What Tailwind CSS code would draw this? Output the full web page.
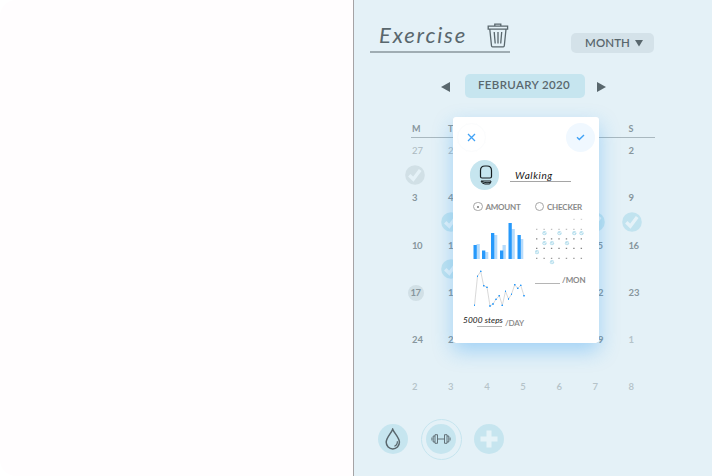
<!DOCTYPE html>
<html lang="en">
<head>
<meta charset="utf-8">
<title>Exercise</title>
<script src="https://cdn.jsdelivr.net/npm/@tailwindcss/browser@4"></script>
</head>
<body class="bg-white font-['Lato',sans-serif] leading-none">
<svg class="hidden">
  <symbol id="tick" viewBox="0 0 20 20"><circle cx="10" cy="10" r="9.8" fill="currentColor"/><path d="M4.300 10.200 8.300 14.200 15.200 5" fill="none" stroke="#e5f2f8" stroke-width="3.400"/></symbol>
  <symbol id="mini" viewBox="0 0 6 6"><circle cx="3" cy="3" r="2.100" fill="#b9e0ee"/><path d="M1.8 3.1 2.7 4 4.1 2" fill="none" stroke="#fff" stroke-width=".8"/></symbol>
</svg>
<div class="flex h-[476px] w-[712px] overflow-hidden rounded-l-[16px] bg-[#fffdfe]">
  <section class="w-[353px] shrink-0"></section>
  <main class="relative flex grow flex-col border-l border-[#a5a3a5] bg-[#e4f1f7] text-[#59676d]">
    <header class="flex h-[73px] items-start justify-between pr-[58px] pl-4">
      <div class="mt-[22px] flex h-[30.5px] w-[140px] justify-between border-b-2 border-[#a0adb3] pr-px pl-[9px]">
        <h1 class="pt-px text-[22px] leading-[24px] font-normal italic tracking-[1.8px] whitespace-nowrap">Exercise</h1>
        <svg class="-ml-2 mt-[1px] h-[25px] w-[22px] shrink-0" viewBox="0 0 22 25" fill="none" stroke="currentColor" stroke-width="1.3"><path d="M7.8 3V1.2h6V3M1.2 3.2h19.4v3H1.2zM2.8 6.3 4.5 22.8q.1 1 1 1h10.800q.9 0 1-1L19 6.300M7.200 9l1 11.500M11 9v11.500M14.700 9l-1 11.500"/></svg>
      </div>
      <button class="mt-[32.500px] flex h-[20px] w-[83px] items-center gap-[5px] rounded-[5px] bg-[#d4e2e9] pl-[14px] text-[11.5px] font-semibold tracking-[.1px]">MONTH<svg class="size-[8px]" viewBox="0 0 8 8"><path d="M0 1h8L4 7.500z" fill="currentColor"/></svg></button>
    </header>
    <nav class="flex h-[25px] items-center gap-[12px] pl-[87px]">
      <svg class="mt-[2px] h-[10px] w-[12px]" viewBox="0 0 12 10"><path d="M9 0v10L0 5z" fill="currentColor"/></svg>
      <div class="flex h-[24px] w-[120px] items-center justify-center rounded-[5px] bg-[#c6e5ef] pr-[2px] pb-px text-[11.5px] font-semibold tracking-[.35px] whitespace-nowrap">FEBRUARY 2020</div>
      <svg class="mt-[2px] h-[10px] w-[9px]" viewBox="0 0 9 10"><path d="M0 0v10L9 5z" fill="currentColor"/></svg>
    </nav>
    <div class="mt-[26px] ml-[57px] h-[289px] w-[244px] text-[9.5px] font-bold text-[#87969d]">
      <div class="grid h-[14px] grid-cols-[repeat(7,36.1px)] border-b border-[#a9b8bf] pl-px text-[9px]"><span>M</span><span>T</span><span class="col-start-7">S</span></div>
      <div class="grid auto-rows-[47.300px] grid-cols-[repeat(7,36.1px)] pt-[8px] pl-px">
        <div class="font-normal text-[#abb9c0]">27<svg class="mt-[9px] -ml-[7px] size-[20px] text-[#d1e0e6]"><use href="#tick"/></svg></div><div class="font-normal text-[#abb9c0]">28</div><div class="col-start-7">2</div>
        <div>3</div><div>4<svg class="mt-[9px] -ml-[7px] size-[20px] text-[#c1e3ef]"><use href="#tick"/></svg></div><div class="col-start-6">8<svg class="mt-[9px] -ml-[7px] size-[20px] text-[#c1e3ef]"><use href="#tick"/></svg></div><div>9<svg class="mt-[9px] -ml-[7px] size-[20px] text-[#c1e3ef]"><use href="#tick"/></svg></div>
        <div class="tracking-[-.6px]">10</div><div class="tracking-[-1px]">11<svg class="mt-[9px] -ml-[7px] size-[20px] text-[#c1e3ef]"><use href="#tick"/></svg></div><div class="col-start-6 tracking-[-.6px]">15</div><div class="tracking-[-.6px]">16</div>
        <div><span class="-mt-[3px] -ml-[4.500px] flex size-[16px] items-center justify-center rounded-full bg-[#d1e0e6] tracking-[-.6px]">17</span></div><div class="tracking-[-.6px]">18</div><div class="col-start-6">22</div><div>23</div>
        <div>24</div><div>25</div><div class="col-start-6">29</div><div class="text-[#b5c3c9]">1</div>
        <div class="contents font-semibold text-[#b5c3c9]"><span>2</span><span>3</span><span>4</span><span>5</span><span>6</span><span>7</span><span>8</span></div>
      </div>
    </div>
    <footer class="mt-[5px] ml-[24px] flex h-[42px] items-center">
      <span class="flex size-[30px] items-center justify-center rounded-full bg-[#c6e5ef]"><svg class="h-[22px] w-[16px]" viewBox="0 0 16 22" fill="none" stroke="currentColor" stroke-width="1.500"><path d="M7.700 1.200C6 5.500 1.200 9.500 1.200 14.300a6.600 6.600 0 0 0 13.200 0C14.400 9.500 9.400 5.500 7.700 1.200z"/><path d="M12.400 13.200c.1 2.500-1 4.200-3 5" stroke-width="1.200"/></svg></span>
      <span class="ml-[12.500px] flex size-[41px] items-center justify-center rounded-full border border-[#c6e5ef]"><span class="flex size-[30px] items-center justify-center rounded-full bg-[#c6e5ef]"><svg class="h-[10px] w-[20px]" viewBox="0 0 20 10" fill="none" stroke="currentColor" stroke-width=".9"><path d="M4 .7h2.500v8.600H4zM13.500.700H16v8.600h-2.500zM6.500 5h7M4 2H2.200v6H4M16 2h1.800v6H16M.900 3.500v3M19.100 3.500v3"/></svg></span></span>
      <span class="ml-[12.500px] flex size-[30px] items-center justify-center rounded-full bg-[#c6e5ef]"><svg class="size-[18px]" viewBox="0 0 18 18"><path d="M6.500.500h5v6h6v5h-6v6h-5v-6h-6v-5h6z" fill="#e5f3f8"/></svg></span>
    </footer>

    <div role="dialog" class="absolute top-[117px] left-[99px] h-[226px] w-[146px] rounded-[3px] bg-white text-[#8a8a8a] shadow-[0_8px_20px_rgba(33,150,243,0.34)]">
      <div class="flex h-[43px] justify-between pt-[6px] pr-[4px] pl-[4px]">
        <span class="flex size-[29px] items-center justify-center rounded-full border border-[#fbfcfd]"><svg class="size-[9px]" viewBox="0 0 9 9"><path d="M1 1l7 7M8 1 1 8" stroke="#40a2f6" stroke-width="1.300"/></svg></span>
        <span class="flex size-[29px] items-center justify-center rounded-full bg-[#f0f8ff]"><svg class="h-[7px] w-[9px]" viewBox="0 0 9 7" fill="none"><path d="M1 3.300 3.300 5.500 8 1" stroke="#40a2f6" stroke-width="1.400"/></svg></span>
      </div>
      <div class="flex h-[30px] gap-[11px] pl-[16.500px]">
        <span class="flex size-[29.500px] items-center justify-center rounded-full bg-[#c6e5ef] pl-[3px]"><svg class="h-[20px] w-[14px]" viewBox="0 0 14 20" fill="none" stroke="#161d20"><path d="M1.500 11.500V5.500Q1.500 1 6 1h2q4.500 0 4.500 4.500v6q0 1.500-1.500 1.500H3q-1.500 0-1.500-1.500z" stroke-width="1.200"/><path d="M2 16h10l-.5 2q-.3 1-1.500 1H6Q3 19 2 16zM3 16.400q2 1.500 5 1.300l3.500-.2" stroke-width="1"/></svg></span>
        <div class="h-[22px] w-[61px] border-b border-[#a5a5a5] pt-[10px] pl-[5px] text-[10px] font-normal text-[#161616] italic tracking-[.6px]">Walking</div>
      </div>
      <div class="mt-[11px] flex h-[11px] items-center pl-[20px] text-[8px] font-bold whitespace-nowrap">
        <span class="flex size-[9.500px] items-center justify-center rounded-full border border-[#a6a6a6]"><i class="size-[2px] rounded-full bg-[#777]"></i></span><span class="ml-[3px] w-[36px] pt-px tracking-[-.25px]">AMOUNT</span>
        <span class="ml-[13px] size-[9.500px] rounded-full border border-[#a6a6a6]"></span><span class="ml-[3px] pt-px tracking-[-.2px]">CHECKER</span>
      </div>
      <div class="flex gap-[8px] pt-[4px] pl-[20px]">
        <div class="w-[54px]">
          <svg class="h-[43px] w-[54px]" viewBox="473 216 54 43"><path fill="#b5dbfc" d="M476.500 244h3.300v15h-3.300zM485 252h3.300v7H485zM494 235h3.300v24H494zM502.500 245h3.300v14h-3.300zM511.500 229h3.300v30h-3.300zM520 239h3.300v20H520z"/><path fill="#2699fb" d="M473.500 245h3.300v14h-3.300zM482 250.500h3.300v8.500H482zM491 233h3.300v26H491zM500 250.500h3.300v8.500H500zM508.500 223h3.300v36h-3.300zM517.500 235h3.300v24h-3.300z"/></svg>
          <svg class="mt-[9px] h-[42px] w-[54px]" viewBox="473 268 54 42" fill="none"><defs><marker id="dot" viewBox="0 0 2 2" refX="1" refY="1" markerWidth="1.800" markerHeight="1.800" markerUnits="userSpaceOnUse"><circle cx="1" cy="1" r="1" fill="#2699fb"/></marker></defs><path d="M474.500 305.300 477.500 276.300 480.700 271.300 483.700 285.700 487 287.300 490 306 493 304 496 299.300 499.300 295.700 502.300 305.300 505.500 291.300 508.500 299 511.500 294.300 514.700 284.700 517.700 288.300 520.700 285.300 524 295.700" stroke="#cfcfcf" stroke-width=".8" marker-start="url(#dot)" marker-mid="url(#dot)" marker-end="url(#dot)"/></svg>
          <div class="-ml-[10px] flex pt-[6px] text-[8px] whitespace-nowrap">
            <div class="relative h-[11px] w-[42px] text-[8.300px] font-normal text-[#161616] italic tracking-[.1px]">5000 steps<span class="absolute bottom-[0px] left-[14px] h-px w-[25px] bg-[#b5b5b5]"></span></div><span class="pt-[3px] font-semibold tracking-[-.15px] text-[#888]">/DAY</span>
          </div>
        </div>
        <div class="w-[56px]">
          <svg class="h-[52px] w-[56px]" viewBox="535 214 56 52"><g transform="translate(0 -1.700)" stroke="#858585" stroke-width="1.200" stroke-dasharray="1.400 6.040"><path d="M573.300 219h9" opacity=".35"/><path d="M536 229h47" opacity=".5"/><path d="M536 238.500h47M536 248h47"/><path d="M536 258h47" opacity=".8"/></g>
          <g transform="translate(0 -1.800)"><use href="#mini" x="541.500" y="230" width="6" height="6"/><use href="#mini" x="556.500" y="230" width="6" height="6"/><use href="#mini" x="571.300" y="230" width="6" height="6"/><use href="#mini" x="578.500" y="230" width="6" height="6"/><use href="#mini" x="541.500" y="240" width="6" height="6"/><use href="#mini" x="549" y="240" width="6" height="6"/><use href="#mini" x="564" y="240" width="6" height="6"/><use href="#mini" x="534" y="249" width="6" height="6"/><use href="#mini" x="549" y="259" width="6" height="6"/></g></svg>
          <div class="flex items-end gap-[2px] pt-[7.500px] text-[8px] font-bold"><span class="h-px w-[25px] bg-[#b5b5b5]"></span><span class="tracking-[-.1px]">/MON</span></div>
        </div>
      </div>
    </div>
  </main>
</div>
</body>
</html>
